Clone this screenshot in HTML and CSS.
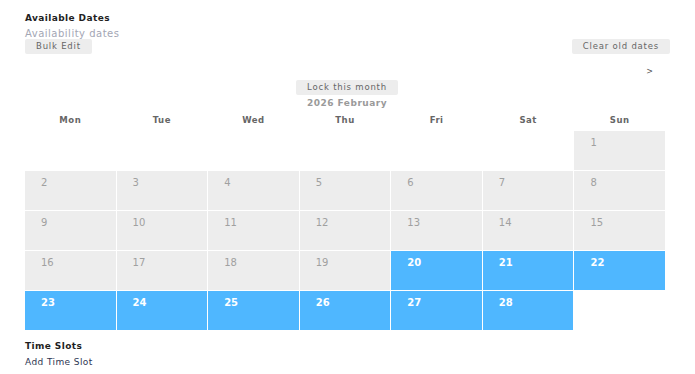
FILE: index.html
```html
<!DOCTYPE html>
<html lang="en">
<head>
    <meta charset="UTF-8">
    <meta name="viewport" content="width=device-width, initial-scale=1.0">
    <title>Available Dates</title>
    <link rel="stylesheet" href="styles.css">
</head>
<body>
    <div class="container">
        <h3 class="section-title">Available Dates</h3>
        <div class="subtitle">Availability dates</div>
        <div class="toolbar">
            <button type="button" class="btn">Bulk Edit</button>
            <button type="button" class="btn">Clear old dates</button>
        </div>
        <div class="month-nav">
            <span class="next">&gt;</span>
        </div>
        <div class="month-head">
            <button type="button" class="btn">Lock this month</button>
            <div class="month-name">2026 February</div>
        </div>
        <div class="weekdays">
            <div>Mon</div><div>Tue</div><div>Wed</div><div>Thu</div><div>Fri</div><div>Sat</div><div>Sun</div>
        </div>
        <div class="calendar">
            <div class="day empty"></div>
            <div class="day empty"></div>
            <div class="day empty"></div>
            <div class="day empty"></div>
            <div class="day empty"></div>
            <div class="day empty"></div>
            <div class="day">1</div>
            <div class="day">2</div>
            <div class="day">3</div>
            <div class="day">4</div>
            <div class="day">5</div>
            <div class="day">6</div>
            <div class="day">7</div>
            <div class="day">8</div>
            <div class="day">9</div>
            <div class="day">10</div>
            <div class="day">11</div>
            <div class="day">12</div>
            <div class="day">13</div>
            <div class="day">14</div>
            <div class="day">15</div>
            <div class="day">16</div>
            <div class="day">17</div>
            <div class="day">18</div>
            <div class="day">19</div>
            <div class="day available">20</div>
            <div class="day available">21</div>
            <div class="day available">22</div>
            <div class="day available">23</div>
            <div class="day available">24</div>
            <div class="day available">25</div>
            <div class="day available">26</div>
            <div class="day available">27</div>
            <div class="day available">28</div>
        </div>
        <h3 class="section-title slots-title">Time Slots</h3>
        <a class="add-slot">Add Time Slot</a>
    </div>
</body>
</html>
```

FILE: styles.css
```css
body {
    font-family: "DejaVu Sans", sans-serif;
    margin: 0;
    background: #fff;
    color: #222;
}
.container {
    width: 645px;
    padding: 12px 0 0 25px;
}
.section-title {
    font-size: 9px;
    letter-spacing: 0.4px;
    font-weight: bold;
    margin: 0;
    line-height: 12px;
    color: #1f1f1f;
}
.subtitle {
    margin-top: 4px;
    font-size: 10px;
    letter-spacing: 0.5px;
    line-height: 11px;
    color: #a3a6b4;
}
.toolbar {
    display: flex;
    justify-content: space-between;
    align-items: flex-end;
}
.btn {
    font-family: inherit;
    font-size: 8.5px;
    letter-spacing: 0.8px;
    color: #666;
    background: #ededed;
    border: none;
    border-radius: 2px;
    padding: 0 11px;
    height: 15px;
    line-height: 15px;
}
.month-nav {
    display: flex;
    justify-content: flex-end;
    padding-right: 17px;
    margin-top: 12px;
    height: 12px;
}
.next {
    font-size: 8px;
    line-height: 12px;
    color: #555;
}
.month-head {
    width: 640px;
    display: flex;
    flex-direction: column;
    align-items: center;
    margin-top: 2px;
    padding-left: 4px;
    box-sizing: border-box;
}
.month-name {
    font-size: 9px;
    letter-spacing: 0.5px;
    font-weight: bold;
    color: #9a9a9a;
    line-height: 12px;
    margin-top: 2px;
}
.weekdays {
    width: 640px;
    display: grid;
    grid-template-columns: repeat(7, 1fr);
    gap: 1px;
    font-size: 8.5px;
    letter-spacing: 0.5px;
    font-weight: bold;
    color: #666;
    text-align: center;
    line-height: 12px;
    margin-top: 5px;
}
.calendar {
    width: 640px;
    display: grid;
    grid-template-columns: repeat(7, 1fr);
    grid-auto-rows: 39px;
    gap: 1px;
    margin-top: 5px;
}
.day {
    background: #ededed;
    color: #a0a0a0;
    font-size: 10px;
    line-height: 12px;
    padding: 6px 0 0 16px;
}
.day.empty {
    background: transparent;
}
.day.available {
    background: #4fb7ff;
    color: #fff;
    font-weight: bold;
}
.slots-title {
    margin-top: 10px;
}
.add-slot {
    display: block;
    margin-top: 4px;
    font-size: 9px;
    letter-spacing: 0.4px;
    line-height: 12px;
    color: #2d3552;
}
```
